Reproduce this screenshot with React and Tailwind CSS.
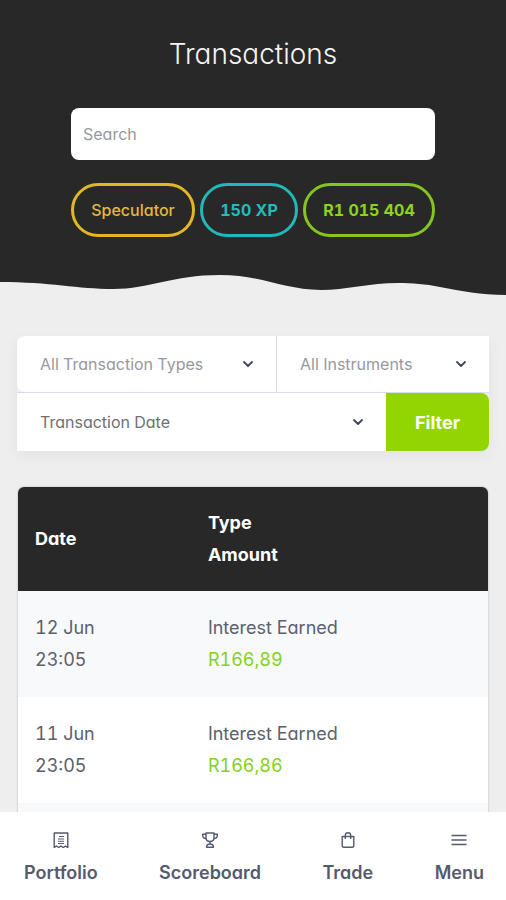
import React from "react";

function Chevron() {
  return (
    <svg
      aria-hidden="true"
      viewBox="0 0 12 8"
      className="pointer-events-none absolute right-[22px] top-1/2 h-2 w-3 -translate-y-1/2"
      fill="none"
      stroke="#3d4460"
      strokeWidth="1.8"
      strokeLinecap="round"
      strokeLinejoin="round"
    >
      <path d="M2 2 L6 6 L10 2" />
    </svg>
  );
}

function FilterSelect({ label, className, tone }) {
  return (
    <div className={`relative ${className}`}>
      <select
        aria-label={label}
        className={`h-full w-full appearance-none bg-transparent pl-[23px] pr-10 text-base outline-none ${tone}`}
      >
        <option>{label}</option>
      </select>
      <Chevron />
    </div>
  );
}

const pills = [
  { text: "Speculator", style: "border-[#e3b722] text-[#e3b93c] font-medium" },
  { text: "150 XP", style: "border-[#22b8b8] text-[#22bcc0] font-bold" },
  { text: "R1 015 404", style: "border-[#86c420] text-[#8fd11f] font-bold" },
];

const rows = [
  { day: "12 Jun", time: "23:05", type: "Interest Earned", amount: "R166,89" },
  { day: "11 Jun", time: "23:05", type: "Interest Earned", amount: "R166,86" },
];

const icons = {
  portfolio: (
    <>
      <path d="M1.2 15.5 V1 H14.8 V15.5 L12.5 14 L10.3 15.5 L8 14 L5.7 15.5 L3.5 14 Z" />
      <path d="M6 4.5 H11 M5 7 H11 M5 9.3 H11 M5 11.5 H11" strokeWidth="1" />
    </>
  ),
  scoreboard: (
    <>
      <path d="M4 1 H12 V5.5 C12 8 10.3 9.5 8 9.5 C5.7 9.5 4 8 4 5.5 Z" />
      <path d="M4 2.2 H0.7 V3.5 C0.7 5.5 2.3 6.5 4.4 6.6 M12 2.2 H15.3 V3.5 C15.3 5.5 13.7 6.5 11.6 6.6" />
      <path d="M8 9.5 V12 M4.5 15.3 C4.5 13.2 6 12 8 12 C10 12 11.5 13.2 11.5 15.3 Z" />
    </>
  ),
  trade: (
    <>
      <path d="M2.2 4.5 H13.8 V13.5 C13.8 14.7 13.2 15.3 12 15.3 H4 C2.8 15.3 2.2 14.7 2.2 13.5 Z" />
      <path d="M5.3 7 V3.4 C5.3 1.6 6.4 0.7 8 0.7 C9.6 0.7 10.7 1.6 10.7 3.4 V7" />
    </>
  ),
  menu: <path d="M0.5 3.5 H15.5 M0.5 8 H15.5 M0.5 12.5 H15.5" />,
};

const tabs = [
  { label: "Portfolio", icon: "portfolio" },
  { label: "Scoreboard", icon: "scoreboard" },
  { label: "Trade", icon: "trade" },
  { label: "Menu", icon: "menu" },
];

export default function App() {
  return (
    <div className="flex h-screen flex-col bg-[#eeeeee] font-['Inter',sans-serif] [font-feature-settings:'cv11','tnum']">
      <main className="min-h-0 flex-1 overflow-y-auto [scrollbar-width:none]">
        <header>
          <div className="bg-[#282828] px-[71px] pb-9 pt-8">
            <h1 className="text-center text-[28px] font-light leading-[44px] text-[#f4f4f4]">
              Transactions
            </h1>
            <input
              type="search"
              aria-label="Search"
              placeholder="Search"
              className="mt-8 block h-[52px] w-full rounded-lg bg-white px-3 text-base text-gray-700 outline-none placeholder:text-[#9498a0]"
            />
            <div className="mt-[23px] flex gap-[5px]">
              {pills.map((p) => (
                <span
                  key={p.text}
                  className={`flex h-[54px] flex-auto items-center justify-center whitespace-nowrap rounded-full border-[3px] px-3 text-base ${p.style}`}
                >
                  {p.text}
                </span>
              ))}
            </div>
          </div>
          <svg
            aria-hidden="true"
            viewBox="0 0 506 23"
            preserveAspectRatio="none"
            className="block h-[23px] w-full"
          >
            <path
              fill="#282828"
              d="M0 0 H506 V22 C480 22 462 18 440 14 C425 11 413 10 398 10 C370 10 345 17 321 17 C284 17 262 2 220 2 C172 2 150 16 113 16 C78 16 50 9 0 9 Z"
            />
          </svg>
        </header>

        <form
          className="mx-[17px] mt-10 shadow-[0_4px_14px_rgba(0,0,0,0.05)]"
          onSubmit={(e) => e.preventDefault()}
        >
          <div className="flex h-[57px] border-b border-[#dcdce8]">
            <FilterSelect
              label="All Transaction Types"
              tone="text-[#9599a0]"
              className="flex-[55] rounded-l-lg border-r border-[#dcdce8] bg-white"
            />
            <FilterSelect
              label="All Instruments"
              tone="text-[#9599a0]"
              className="flex-[45] bg-white"
            />
          </div>
          <div className="flex h-[58px]">
            <FilterSelect
              label="Transaction Date"
              tone="text-[#707070]"
              className="flex-1 bg-white"
            />
            <button
              type="submit"
              className="w-[103px] rounded-r-lg bg-[#92d500] pt-px text-lg font-bold text-white"
            >
              Filter
            </button>
          </div>
        </form>

        <div className="mx-[18px] mt-9 overflow-hidden rounded-t-md shadow-[0_0_2px_rgba(0,0,0,0.3)]">
          <table className="w-full table-fixed text-left text-lg leading-8">
            <thead className="bg-[#282828] font-bold text-white">
              <tr>
                <th className="w-[37%] px-[17px] py-5">Date</th>
                <th className="px-4 py-5">
                  Type
                  <br />
                  Amount
                </th>
              </tr>
            </thead>
            <tbody className="text-[#5c606d]">
              {rows.map((r) => (
                <tr key={r.day} className="bg-white odd:bg-[#f8f9fb]">
                  <td className="px-[17px] py-[21px]">
                    {r.day}
                    <br />
                    {r.time}
                  </td>
                  <td className="px-4 py-[21px]">
                    {r.type}
                    <br />
                    <span className="text-[#86d11a]">{r.amount}</span>
                  </td>
                </tr>
              ))}
              <tr className="bg-[#f8f9fb]">
                <td colSpan={2} className="h-16" />
              </tr>
            </tbody>
          </table>
        </div>
      </main>

      <nav className="flex h-[88px] shrink-0 justify-between bg-white pl-6 pr-[22px] pt-5">
        {tabs.map((t) => (
          <a
            key={t.label}
            href="#"
            className="flex flex-col items-center text-lg font-semibold leading-6 text-[#555a6e]"
          >
            <svg
              aria-hidden="true"
              viewBox="0 0 16 16"
              className="mb-[13px] h-4 w-4"
              fill="none"
              stroke="currentColor"
              strokeWidth="1.4"
              strokeLinejoin="round"
            >
              {icons[t.icon]}
            </svg>
            {t.label}
          </a>
        ))}
      </nav>
    </div>
  );
}
